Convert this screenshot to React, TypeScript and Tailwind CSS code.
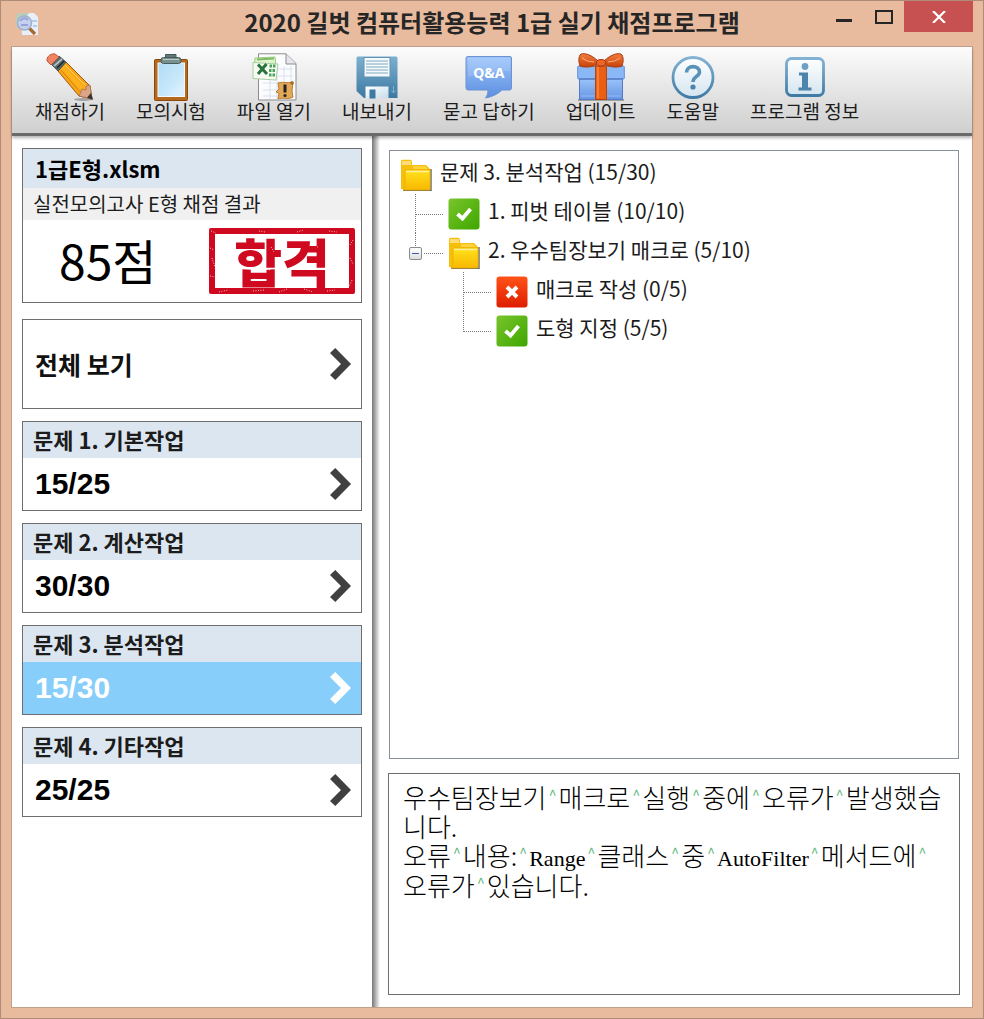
import React from 'react';

const PencilIcon = () => (
  <svg viewBox="0 0 48 48" className="h-12 w-12" aria-hidden="true">
    <defs>
      <linearGradient id="pencil" x1="0" y1="1" x2="1" y2="0">
        <stop offset="0" stopColor="#e07a06" />
        <stop offset=".5" stopColor="#ffb21c" />
        <stop offset="1" stopColor="#c96a07" />
      </linearGradient>
    </defs>
    <ellipse cx="37" cy="46.500" rx="9" ry="1.500" fill="#777" opacity=".6" />
    <path d="M12 18 20 9 44 33 46 46 33 43Z" fill="url(#pencil)" stroke="#a65a08" />
    <path d="M15 17 35 40" stroke="#c8740a" strokeWidth=".8" fill="none" />
    <path d="M19 12 42 35" stroke="#ffd46a" strokeWidth="1" fill="none" />
    <path d="M33 43 36 36 40 37 40 33 44 32 46 46Z" fill="#dca583" stroke="#9a6a50" strokeWidth=".7" />
    <path d="M41 44.500 45 40 47 47Z" fill="#333" />
    <path d="M5 11 13 3 20 9 12 18Z" fill="#53696c" stroke="#344" strokeWidth=".8" />
    <path d="M8 13 16 6" stroke="#adc0c0" strokeWidth="1.800" />
    <path d="M11 15 18 8" stroke="#222" strokeWidth="1.300" />
    <path d="M1 8C0 4 5 0 9 1L13 4 5 12Z" fill="#ef8465" stroke="#c14d31" strokeWidth=".9" />
  </svg>
);

const ClipboardIcon = () => (
  <svg viewBox="0 0 48 48" className="h-12 w-12" aria-hidden="true">
    <defs>
      <linearGradient id="clip" x1="0" y1="0" x2="1" y2="1">
        <stop offset="0" stopColor="#b2dcf5" />
        <stop offset=".6" stopColor="#c8e8fb" />
        <stop offset="1" stopColor="#e8f7ff" />
      </linearGradient>
    </defs>
    <rect x="7.500" y="6.500" width="33" height="41" rx="1" fill="#b4691c" stroke="#8a480c" />
    <rect x="11" y="10" width="26.500" height="33.500" fill="url(#clip)" stroke="#f2faff" />
    <path d="M37 34 27 43 37 43Z" fill="#d9effb" />
    <path d="M18.500 5v-3.500h10.500v3.500" fill="#607878" stroke="#405858" />
    <rect x="14" y="4.500" width="20" height="6" rx="2.500" fill="#78908f" stroke="#465d5d" />
    <path d="M16 6.500h16" stroke="#b8c9c8" />
  </svg>
);

const ExcelIcon = () => (
  <svg viewBox="0 0 48 48" className="h-12 w-12" aria-hidden="true">
    <path d="M8.500 .8H36L46 10.500V47H8.500Z" fill="#fbfcfe" stroke="#8c8c8c" />
    <path d="M36 1v10h10" fill="#e8e8ec" stroke="#8c8c8c" />
    <path d="M13 16h30M13 23h30M13 30h30M13 37h30M13 43h30M20 13v33M27 13v33M34 13v33M41 13v33" stroke="#dbe0ef" />
    <path d="M5 5 25 4 26 14 4 17Z" fill="#dff3cf" stroke="#9ccb83" />
    <path d="M7 6.500 24 5.500" stroke="#7fbd62" strokeWidth="2" />
    <path d="M3 9.500 28 11 26 27 3 25.500Z" fill="#f6faf3" stroke="#a8cda0" />
    <path d="M8 11.500 17 21M16.500 11 8 21" stroke="#28723c" strokeWidth="3" />
    <path d="M19.500 13h6M19 17.500h6M19 22h6" stroke="#4ba35a" strokeWidth="3" strokeDasharray="2.500 1" />
    <path d="M28 30c5-2 9 1 15-1l-1 9 1 6c-5 3-10 0-15 2l1-6-3-1 3-3Z" fill="#e3a857" stroke="#ba7c33" />
    <circle cx="42" cy="30" r="1.800" fill="#a66b2c" />
    <path d="M35 31.500v8" stroke="#222" strokeWidth="3" />
    <circle cx="35" cy="42.500" r="1.600" fill="#222" />
  </svg>
);

const SaveIcon = () => (
  <svg viewBox="0 0 48 48" className="h-12 w-12" aria-hidden="true">
    <defs>
      <linearGradient id="disk" x1="0" y1="0" x2="0" y2="1">
        <stop offset="0" stopColor="#7db0d0" />
        <stop offset="1" stopColor="#3d78a2" />
      </linearGradient>
      <linearGradient id="slot" x1="0" y1="0" x2="1" y2="1">
        <stop offset="0" stopColor="#fff" />
        <stop offset="1" stopColor="#c6dce9" />
      </linearGradient>
    </defs>
    <path d="M5 3.500H43Q44.500 3.500 44.500 5V45H11L3.500 38V5Q3.500 3.500 5 3.500Z" fill="url(#disk)" />
    <path d="M11 4.500h26v19.500h-26Z" fill="#f5f9fb" stroke="#5d92b4" />
    <path d="M13 8h22M13 11h22M13 14h22M13 17h22M13 20h22" stroke="#7fa8c0" />
    <path d="M12.500 33.500h23v11.500h-23Z" fill="url(#slot)" />
    <rect x="16.500" y="36.500" width="6" height="9" fill="#3d7ba5" />
    <path d="M40.500 33v6M38.500 37.500l2 2.500 2-2.500" stroke="#7fb1cf" fill="none" />
  </svg>
);

const QaIcon = () => (
  <span className="relative block h-12 w-12">
    <svg viewBox="0 0 48 48" className="h-12 w-12" aria-hidden="true">
      <defs>
        <linearGradient id="qa" x1="0" y1="0" x2="0" y2="1">
          <stop offset="0" stopColor="#9cc4fb" />
          <stop offset="1" stopColor="#5c8fe0" />
        </linearGradient>
      </defs>
      <path d="M3 3.500H45Q46.500 3.500 46.500 5V35Q46.500 37 44.500 37H37Q31 43 20.500 45Q23.500 41 23 37H3Q1 37 1 35V5Q1 3.500 3 3.500Z" fill="url(#qa)" stroke="#6c92d2" />
      <path d="M3 5H45V18Q25 17 3 24Z" fill="#fff" opacity=".13" />
    </svg>
    <span className="absolute inset-x-0 top-3 text-center font-['Noto_Sans'] text-[14px] leading-4 font-bold text-white">Q&amp;A</span>
  </span>
);

const GiftIcon = () => (
  <svg viewBox="0 0 48 48" className="h-12 w-12" aria-hidden="true">
    <defs>
      <linearGradient id="gift" x1="0" y1="0" x2="0" y2="1">
        <stop offset="0" stopColor="#9cc5fa" />
        <stop offset="1" stopColor="#6594e4" />
      </linearGradient>
      <linearGradient id="bow" x1="0" y1="0" x2="0" y2="1">
        <stop offset="0" stopColor="#f47d40" />
        <stop offset="1" stopColor="#c64208" />
      </linearGradient>
    </defs>
    <path d="M1 47h46" stroke="#777" strokeWidth="2" opacity=".6" />
    <rect x="2.500" y="25" width="43" height="21.500" fill="url(#gift)" stroke="#547bc4" />
    <rect x=".7" y="13" width="46.600" height="13" rx="1" fill="#8ab8f7" stroke="#648fd9" />
    <path d="M2 26h44" stroke="#577fc8" strokeWidth="1.500" />
    <path d="M4 43h15M30 43h14" stroke="#9abcf5" />
    <rect x="18.500" y="13" width="11" height="33.500" fill="#e95f13" stroke="#b8430a" />
    <path d="M21 14v31" stroke="#ff8948" strokeWidth="1.500" />
    <path d="M21 8C14 1 5-1 3 2 1 6 2 10 3 13 8 15 17 14 21 11ZM27 8C34 1 43-1 45 2 47 6 46 10 45 13 40 15 31 14 27 11Z" fill="url(#bow)" stroke="#a93a0c" />
    <path d="M5 5Q10 9 17 9M43 5Q38 9 31 9" stroke="#ffae82" fill="none" />
    <ellipse cx="24" cy="9.800" rx="4.500" ry="3.300" fill="#ec6529" stroke="#a93a0c" />
  </svg>
);

const HelpIcon = () => (
  <svg viewBox="0 0 48 48" className="h-12 w-12" aria-hidden="true">
    <defs>
      <linearGradient id="blueLine" x1="0" y1="0" x2="0" y2="1">
        <stop offset="0" stopColor="#83b2d4" />
        <stop offset="1" stopColor="#3f7ba5" />
      </linearGradient>
      <linearGradient id="pale" x1="0" y1="0" x2="0" y2="1">
        <stop offset="0" stopColor="#fff" />
        <stop offset="1" stopColor="#d4e5ef" />
      </linearGradient>
    </defs>
    <circle cx="24" cy="24.500" r="20" fill="url(#pale)" stroke="url(#blueLine)" strokeWidth="2.800" />
    <path d="M17.500 19.500C17.500 11.500 30.500 12 30.500 19C30.500 23.500 24 23.500 24 29" fill="none" stroke="#5a91b8" strokeWidth="3.600" />
    <circle cx="24" cy="34" r="2.600" fill="#4b83ab" />
  </svg>
);

const InfoIcon = () => (
  <svg viewBox="0 0 48 48" className="h-12 w-12" aria-hidden="true">
    <rect x="5.500" y="5.500" width="37" height="37" rx="5" fill="url(#pale)" stroke="url(#blueLine)" strokeWidth="2.800" />
    <circle cx="24" cy="13.500" r="3.400" fill="#6d9fc3" />
    <path d="M18 19.500h9v15h3.500v3H17.500v-3H21v-12h-3Z" fill="#4c84ac" />
  </svg>
);

const AppIcon = () => (
  <svg viewBox="0 0 24 24" className="h-6 w-6" aria-hidden="true">
    <path d="M5 1h14l4 4v18H7Z" fill="#e9eff8" />
    <path d="M1 5Q1 1 6 1h8L3 17Q0 12 1 5Z" fill="#b9cdb8" />
    <path d="M17 9h5M18 14h4" stroke="#9cc4ea" strokeWidth="1.500" />
    <path d="M14 16 20 22" stroke="#a66a31" strokeWidth="3.200" />
    <circle cx="9.500" cy="11" r="7" fill="#c3d0ee" stroke="#9fb0cc" strokeWidth="1.500" />
    <path d="M5 9q4-5 8-1M6 13h7" stroke="#98a2d8" strokeWidth="2" fill="none" />
  </svg>
);

const FolderIcon = () => (
  <svg viewBox="0 0 32 32" className="h-8 w-8 shrink-0" aria-hidden="true">
    <defs>
      <linearGradient id="folder" x1="0" y1="0" x2="0" y2="1">
        <stop offset="0" stopColor="#ffe11c" />
        <stop offset="1" stopColor="#f8b800" />
      </linearGradient>
    </defs>
    <path d="M3 31.500H31V10" stroke="#77715a" strokeWidth="1.500" fill="none" />
    <path d="M1 2Q1 .8 3 .8H10Q12 .8 12 3V6H26L30 10V30H1Z" fill="#f6bf0c" />
    <path d="M2 2H11V6H2Z" fill="#ffdc7a" />
    <path d="M13 7H25L28 10H13Z" fill="#ffd23c" />
    <path d="M6 11H30V29Q30 31 28 31H3Q5 29 5 26V12Z" fill="url(#folder)" stroke="#eaa900" strokeWidth=".7" />
    <path d="M6 12.500H29" stroke="#ffef9e" strokeWidth="1.500" />
  </svg>
);

const PassIcon = () => (
  <svg viewBox="0 0 32 32" className="h-8 w-8 shrink-0" role="img" aria-label="정답">
    <defs>
      <linearGradient id="pass" x1="0" y1="0" x2="1" y2="1">
        <stop offset="0" stopColor="#79c52b" />
        <stop offset="1" stopColor="#3ea600" />
      </linearGradient>
    </defs>
    <rect x=".5" y=".5" width="31" height="31" rx="3" fill="url(#pass)" />
    <path d="M9.500 16 14.500 20.500 22.500 11" fill="none" stroke="#fff" strokeWidth="3.800" />
  </svg>
);

const FailIcon = () => (
  <svg viewBox="0 0 32 32" className="h-8 w-8 shrink-0" role="img" aria-label="오답">
    <defs>
      <linearGradient id="fail" x1="0" y1="0" x2="0" y2="1">
        <stop offset="0" stopColor="#ff5317" />
        <stop offset="1" stopColor="#de1d00" />
      </linearGradient>
    </defs>
    <rect x=".5" y=".5" width="31" height="31" rx="3" fill="url(#fail)" />
    <path d="M11 11 21 21M21 11 11 21" stroke="#fff" strokeWidth="4" />
  </svg>
);

const Chevron = () => (
  <svg viewBox="0 0 21 32" className="h-8 w-[21px] shrink-0" fill="currentColor" aria-hidden="true">
    <path d="M5.300 0 21 16 5.300 32 0 27 11 16 0 5Z" />
  </svg>
);

type GuideKind = 'tee' | 'end' | 'expand' | 'none';

const Guide = ({ kind }: { kind: GuideKind }) => {
  if (kind === 'none') return <span className="w-12 shrink-0" />;
  const bottom = kind === 'tee' ? 39 : kind === 'end' ? 21 : 14;
  return (
    <span className="relative h-[39px] w-12 shrink-0">
      <svg viewBox="0 0 48 39" className="h-[39px] w-12" aria-hidden="true">
        <path d={`M15.500 0V${bottom}`} stroke="#777" strokeDasharray="1 1" />
        <path d={`M${kind === 'expand' ? 24 : 16} 20.500H44`} stroke="#777" strokeDasharray="1 1" />
      </svg>
      {kind === 'expand' && (
        <button
          type="button"
          aria-label="접기"
          className="absolute top-3.5 left-[9px] flex h-[13px] w-[13px] items-center justify-center rounded-[2px] border border-[#8c8c8c] bg-gradient-to-b from-white to-[#ddd]"
        >
          <span className="h-px w-[7px] bg-[#3c5fa8]" />
        </button>
      )}
    </span>
  );
};

const tree: { guides: GuideKind[]; icon: React.ReactNode; label: string }[] = [
  { guides: [], icon: <FolderIcon />, label: '문제 3. 분석작업 (15/30)' },
  { guides: ['tee'], icon: <PassIcon />, label: '1. 피벗 테이블 (10/10)' },
  { guides: ['expand'], icon: <FolderIcon />, label: '2. 우수팀장보기 매크로 (5/10)' },
  { guides: ['none', 'tee'], icon: <FailIcon />, label: '매크로 작성 (0/5)' },
  { guides: ['none', 'end'], icon: <PassIcon />, label: '도형 지정 (5/5)' },
];

const tools = [
  { label: '채점하기', icon: <PencilIcon /> },
  { label: '모의시험', icon: <ClipboardIcon /> },
  { label: '파일 열기', icon: <ExcelIcon /> },
  { label: '내보내기', icon: <SaveIcon /> },
  { label: '묻고 답하기', icon: <QaIcon /> },
  { label: '업데이트', icon: <GiftIcon /> },
  { label: '도움말', icon: <HelpIcon /> },
  { label: '프로그램 정보', icon: <InfoIcon /> },
];

const sections = [
  { title: '문제 1. 기본작업', score: '15/25', active: false },
  { title: '문제 2. 계산작업', score: '30/30', active: false },
  { title: '문제 3. 분석작업', score: '15/30', active: true },
  { title: '문제 4. 기타작업', score: '25/25', active: false },
];

const message = [
  '우수팀장보기^매크로^실행^중에^오류가^발생했습',
  '니다.',
  '오류^내용:^Range^클래스^중^AutoFilter^메서드에^',
  '오류가^있습니다.',
];

const MessageLine = ({ text }: { text: string }) => (
  <p>
    {text.split(/(\^|[A-Za-z]+)/).map((part, i) => {
      if (part === '^')
        return (
          <span key={i} className="inline-block w-3 text-center align-top text-[14px] leading-6 font-normal text-[#5db87c]">
            ^
          </span>
        );
      if (/^[A-Za-z]+$/.test(part))
        return (
          <span key={i} className="font-['Liberation_Serif'] text-[22px] leading-none font-normal text-black">
            {part}
          </span>
        );
      return part;
    })}
  </p>
);

export default function App() {
  return (
    <div className="flex min-h-screen flex-col border border-[#ae8c77] bg-[#e8bb9e] px-2.5 pb-2.5 font-['Noto_Sans_CJK_KR',sans-serif] text-black">
      <header className="grid h-[45px] grid-cols-[1fr_auto_1fr]">
        <div className="flex items-center pl-1">
          <AppIcon />
        </div>
        <h1 className="self-center pb-1 text-[24px] leading-8 font-bold whitespace-nowrap text-[#262626]">
          2020 길벗 컴퓨터활용능력 1급 실기 채점프로그램
        </h1>
        <div className="flex h-[31px] justify-end">
          <button type="button" aria-label="최소화" className="flex w-10 items-center justify-center pt-2">
            <span className="h-[3px] w-4 bg-[#262626]" />
          </button>
          <button type="button" aria-label="최대화" className="flex w-10 items-center justify-center">
            <span className="h-3.5 w-[18px] border-2 border-[#262626]" />
          </button>
          <button type="button" aria-label="닫기" className="flex w-[69px] items-center justify-center bg-[#c75050]">
            <svg viewBox="0 0 14 12" className="h-3 w-3.5" aria-hidden="true">
              <path d="M1 0 13 12M13 0 1 12" stroke="#fff" strokeWidth="2.200" />
            </svg>
          </button>
        </div>
      </header>

      <div className="flex grow flex-col border border-[#c4a08b] bg-white">
        <nav className="relative z-10 flex gap-[31px] border-b-[3px] border-[#6a6a6a] bg-gradient-to-b from-[#fcfcfc] to-[#cfcfcf] pt-1.5 pb-3 pl-[23px] shadow-[0_2px_3px_rgba(0,0,0,0.3)]">
          {tools.map((t) => (
            <button type="button" key={t.label} className="flex flex-col items-center text-[19px] leading-5 whitespace-nowrap text-[#1c1c1c]">
              {t.icon}
              {t.label}
            </button>
          ))}
        </nav>

        <main className="flex grow">
          <aside className="flex w-[360px] shrink-0 flex-col gap-3 px-2.5 pt-3">
            <section className="mb-1 border border-[#6e6e6e]">
              <h2 className="bg-[#dce6f0] px-3 py-1 text-[22px] leading-[31px] font-bold">1급E형.xlsm</h2>
              <p className="bg-[#f0f0f0] px-2.5 text-[20px] leading-8 text-[#1c1c1c]">실전모의고사 E형 채점 결과</p>
              <div className="flex h-[82px] items-center justify-between pr-1.5 pl-9">
                <strong className="pb-1 text-[48px] leading-[64px] font-normal">85점</strong>
                <div className="relative flex h-[66px] w-[146px] items-center justify-center rounded-[2px] border-[6px] border-[#cf0a20] text-[#cf0a20]">
                  <span className="text-[52px] leading-[54px] font-black">합격</span>
                  <svg viewBox="0 0 146 66" className="absolute -inset-1.5 h-[66px] w-[146px]" aria-hidden="true">
                    <path
                      d="M2 3l5 2M1 20l4 2M3 30l3 9M1 48l5 1M10 64l9-2M44 63l12-1M70 64l8-3M95 61l9 3M118 63l8-1M143 52l-3 7M141 30l3 6M144 12l-3 5M120 3l8 1M88 4l7-2M50 3l6 1M30 45l4 3M45 51l5 2M62 19l3 5M86 40l9 1M116 20l4 1M106 17l4 3M55 41l7 1"
                      stroke="#fff"
                      strokeWidth="1"
                      strokeDasharray="1 1.500"
                      opacity=".75"
                    />
                  </svg>
                </div>
              </div>
            </section>

            <button type="button" className="flex h-[90px] items-center justify-between border border-[#6e6e6e] pr-2.5 pl-3 text-left">
              <span className="text-[25px] leading-8 font-bold text-[#111]">전체 보기</span>
              <span className="text-[#404040]">
                <Chevron />
              </span>
            </button>

            {sections.map((s) => (
              <button type="button" key={s.title} aria-pressed={s.active} className="flex h-[90px] flex-col border border-[#6e6e6e] text-left">
                <span className="w-full bg-[#dce6f0] px-2.5 pb-0.5 text-[22px] leading-[34px] font-bold text-[#1c1c1c]">{s.title}</span>
                <span className={`flex w-full grow items-center justify-between pr-2.5 pl-3 ${s.active ? 'bg-[#87cefa] text-white' : 'text-[#404040]'}`}>
                  <span className={`font-['Liberation_Sans'] text-[30px] leading-9 font-bold ${s.active ? 'text-white' : 'text-black'}`}>{s.score}</span>
                  <Chevron />
                </span>
              </button>
            ))}
          </aside>

          <div className="w-2 shrink-0 bg-gradient-to-r from-[#777] to-white" />

          <div className="flex min-w-0 grow flex-col gap-3.5 pt-3.5 pr-3 pb-3 pl-2">
            <section className="mx-px grow border border-[#8a8f9c] px-2.5 pt-1">
              <ul>
                {tree.map((row) => (
                  <li key={row.label} className="flex h-[39px] items-center whitespace-nowrap">
                    {row.guides.map((g, i) => (
                      <Guide key={i} kind={g} />
                    ))}
                    {row.icon}
                    <span className="pb-2 pl-2 text-[21px] leading-8 text-[#1c1c1c]">{row.label}</span>
                  </li>
                ))}
              </ul>
            </section>
            <section className="h-[222px] shrink-0 border border-[#6e6e6e] px-3.5 pt-2 text-[26px] leading-[29px] font-light text-black">
              {message.map((m) => (
                <MessageLine key={m} text={m} />
              ))}
            </section>
          </div>
        </main>
      </div>
    </div>
  );
}
